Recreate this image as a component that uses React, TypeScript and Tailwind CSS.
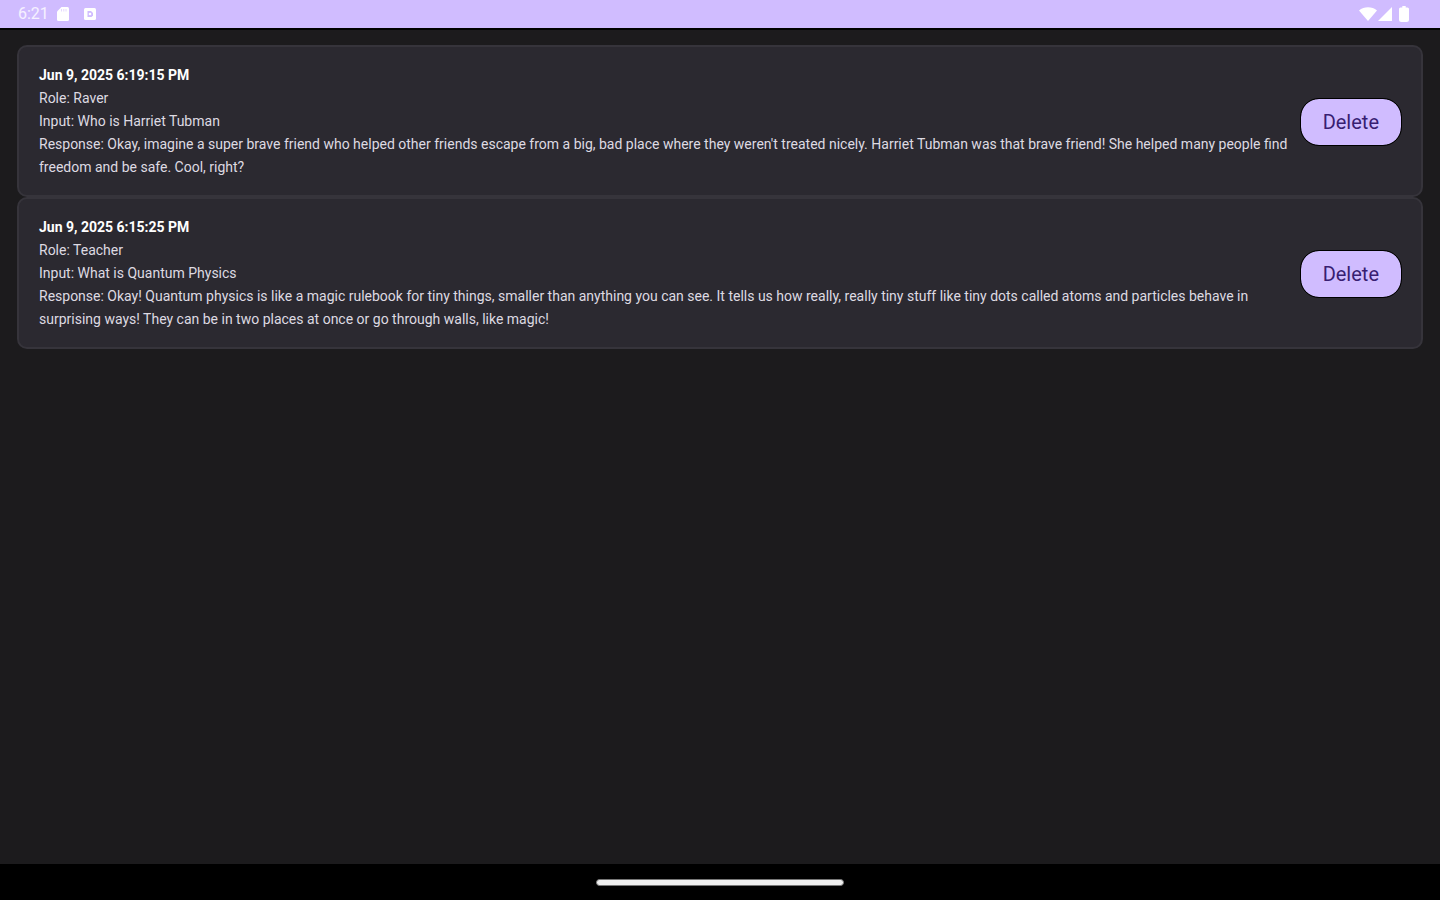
type Entry = {
  date: string;
  role: string;
  input: string;
  response: string;
};

const entries: Entry[] = [
  {
    date: "Jun 9, 2025 6:19:15 PM",
    role: "Raver",
    input: "Who is Harriet Tubman",
    response:
      "Okay, imagine a super brave friend who helped other friends escape from a big, bad place where they weren't treated nicely. Harriet Tubman was that brave friend! She helped many people find freedom and be safe. Cool, right?",
  },
  {
    date: "Jun 9, 2025 6:15:25 PM",
    role: "Teacher",
    input: "What is Quantum Physics",
    response:
      "Okay! Quantum physics is like a magic rulebook for tiny things, smaller than anything you can see. It tells us how really, really tiny stuff like tiny dots called atoms and particles behave in surprising ways! They can be in two places at once or go through walls, like magic!",
  },
];

function StatusBar() {
  return (
    <header className="flex h-7 items-center justify-between bg-[#d0bcff] pr-[31px] pl-[18px] text-white">
      <div className="flex items-center">
        <span className="text-base leading-7 text-white/80">6:21</span>
        <svg className="ml-2 h-[14px] w-3" viewBox="0 0 12 14" fill="currentColor" aria-hidden="true">
          <path d="M4.5 0H10.5Q12 0 12 1.5V12.5Q12 14 10.5 14H1.5Q0 14 0 12.5V4.5Z" />
          <path d="M4.5 2v2.5M6.8 2v2.5M9 2v2.5" stroke="#e4d8ff" strokeWidth="1" />
        </svg>
        <svg className="ml-[15px] h-3 w-3" viewBox="0 0 12 12" aria-hidden="true">
          <rect width="12" height="12" rx="1.5" fill="currentColor" />
          <path d="M3.5 3H7L9 5V7.5L7.5 9H3.5Z" fill="#d0bcff" />
          <circle cx="6" cy="6" r="1.3" fill="currentColor" />
        </svg>
      </div>
      <div className="flex items-center">
        <svg className="h-[14px] w-[18px]" viewBox="0 0 18 14" fill="currentColor" aria-hidden="true">
          <path d="M0 3.6C5 -0.8 13 -0.8 18 3.6L9 14Z" />
        </svg>
        <svg className="ml-px h-[14px] w-[14px]" viewBox="0 0 14 14" fill="currentColor" aria-hidden="true">
          <path d="M14 0V14H0Z" />
        </svg>
        <svg className="ml-[7px] h-4 w-[10px]" viewBox="0 0 10 16" fill="currentColor" aria-hidden="true">
          <path d="M3.3 0H6.7V1.5H8.5Q10 1.5 10 3V13.5Q10 16 7.5 16H2.5Q0 16 0 13.5V3Q0 1.5 1.5 1.5H3.3Z" />
        </svg>
      </div>
    </header>
  );
}

function EntryCard({ entry }: { entry: Entry }) {
  return (
    <li className="flex items-center gap-2 rounded-[10px] border-2 border-[#36343b] bg-[#2b2930] px-5 pt-[17px] pb-4">
      <div className="min-w-0 flex-1 text-sm leading-[23px] text-[#dedae2]">
        <h2 className="font-bold text-white">{entry.date}</h2>
        <p>{`Role: ${entry.role}`}</p>
        <p>{`Input: ${entry.input}`}</p>
        <p>{`Response: ${entry.response}`}</p>
      </div>
      <button
        type="button"
        className="h-[46px] shrink-0 rounded-[18px] bg-[#d0bcff] px-[22px] text-xl text-[#381e72] outline-1 outline-black"
      >
        Delete
      </button>
    </li>
  );
}

export default function App() {
  return (
    <div className="flex min-h-screen flex-col bg-[#1c1b1d] font-['Roboto',sans-serif]">
      <StatusBar />
      <main className="flex-1 border-t-2 border-black px-[17px] pt-[15px]">
        <ul className="flex flex-col">
          {entries.map((entry) => (
            <EntryCard key={entry.date} entry={entry} />
          ))}
        </ul>
      </main>
      <footer className="flex h-9 items-center justify-center bg-black">
        <div className="h-[7px] w-[248px] rounded-full border border-[#777777] bg-[#eeeeee]" />
      </footer>
    </div>
  );
}
